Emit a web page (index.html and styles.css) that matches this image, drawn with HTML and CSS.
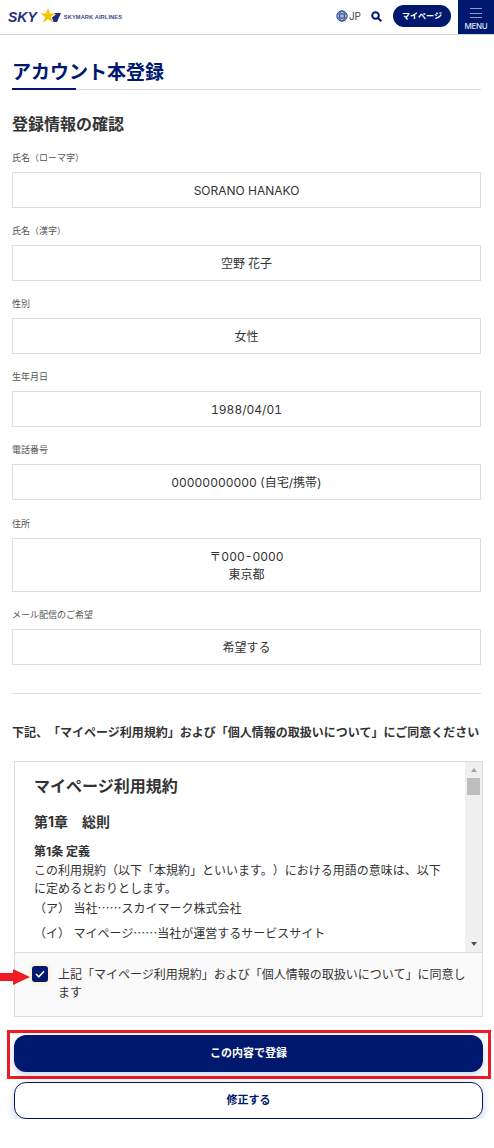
FILE: index.html
```html
<!DOCTYPE html>
<html lang="ja">
<head>
    <meta charset="UTF-8">
    <meta name="viewport" content="width=device-width, initial-scale=1.0">
    <title>アカウント本登録</title>
    <link rel="stylesheet" href="styles.css">
</head>
<body>
    <header class="header">
        <div class="logo">
            <span class="logo-sky">SKY</span>
            <svg class="logo-star" width="22" height="16" viewBox="0 0 22 16">
                <polygon fill="#f5c400" points="8,0 10,5.500 15.500,5.500 11,8.800 13,14.500 8,11 3,14.500 5,8.800 0.500,5.500 6,5.500"/>
                <polygon fill="#1f2f7e" points="14,5 21,5 17,14 13.500,14 12,9.500 15.800,6.500"/>
            </svg>
            <span class="logo-name">SKYMARK AIRLINES</span>
        </div>
        <div class="header-right">
            <div class="lang">
                <svg width="12" height="12" viewBox="0 0 12 12" fill="none" stroke="#3c4f92" stroke-width="1">
                    <circle cx="6" cy="6" r="5.200" fill="#a9b4d4"/>
                    <ellipse cx="6" cy="6" rx="2.400" ry="5.200"/>
                    <path d="M1 4h10M1 8h10"/>
                </svg>
                <span>JP</span>
            </div>
            <svg class="search" width="11" height="11" viewBox="0 0 11 11" fill="none" stroke="#00186e" stroke-width="2">
                <circle cx="4.500" cy="4.500" r="3.300"/>
                <path d="M7 7l3.300 3.300"/>
            </svg>
            <a class="mypage">マイページ</a>
            <div class="menu">
                <div class="menu-lines"><i></i><i></i><i></i></div>
                <span>MENU</span>
            </div>
        </div>
    </header>

    <main class="main">
        <h1 class="title">アカウント本登録</h1>
        <h2 class="subtitle">登録情報の確認</h2>

        <div class="field field-first">
            <div class="label">氏名（ローマ字）</div>
            <div class="value">SORANO HANAKO</div>
        </div>
        <div class="field">
            <div class="label">氏名（漢字）</div>
            <div class="value">空野 花子</div>
        </div>
        <div class="field">
            <div class="label">性別</div>
            <div class="value">女性</div>
        </div>
        <div class="field">
            <div class="label">生年月日</div>
            <div class="value">1988/04/01</div>
        </div>
        <div class="field">
            <div class="label">電話番号</div>
            <div class="value">00000000000 (自宅/携帯)</div>
        </div>
        <div class="field field-address">
            <div class="label">住所</div>
            <div class="value value-tall">〒000-0000<br>東京都</div>
        </div>
        <div class="field">
            <div class="label">メール配信のご希望</div>
            <div class="value">希望する</div>
        </div>

        <hr class="divider">

        <p class="agree-lead">下記、「マイページ利用規約」および「個人情報の取扱いについて」にご同意ください</p>

        <div class="terms">
            <div class="terms-box">
                <div class="terms-text">
                    <h3>マイページ利用規約</h3>
                    <h4>第1章　総則</h4>
                    <h5>第1条 定義</h5>
                    <p class="lead">この利用規約（以下「本規約」といいます。）における用語の意味は、以下に定めるとおりとします。</p>
                    <p class="item item-first">（ア） 当社<span class="jp">……</span>スカイマーク株式会社</p>
                    <p class="item">（イ） マイページ<span class="jp">……</span>当社が運営するサービスサイト</p>
                    <p class="item">（ウ） 登録ユーザー<span class="jp">……</span>本規約に同意のうえ当社が提供する</p>
                </div>
                <div class="scrollbar">
                    <span class="arrow-up"></span>
                    <span class="thumb"></span>
                    <span class="arrow-down"></span>
                </div>
            </div>
            <div class="consent">
                <span class="marker">
                    <svg width="31" height="16" viewBox="0 0 31 16"><polygon fill="#ee1c25" points="0,4 13,4 13,0 30,8 13,16 13,12 0,12"/></svg>
                </span>
                <span class="checkbox">
                    <svg width="10" height="8" viewBox="0 0 10 8" fill="none" stroke="#fff" stroke-width="1.500"><path d="M1 4l2.800 2.800L9 1.200"/></svg>
                </span>
                <span class="consent-text">上記「マイページ利用規約」および「個人情報の取扱いについて」に同意します</span>
            </div>
        </div>

        <div class="actions">
            <div class="highlight">
                <a class="btn btn-primary">この内容で登録</a>
            </div>
            <a class="btn btn-secondary">修正する</a>
        </div>
    </main>
</body>
</html>
```

FILE: styles.css
```css
* {
    box-sizing: border-box;
}
body {
    margin: 0;
    font-family: Inter, "Noto Sans CJK JP", sans-serif;
    text-spacing-trim: space-all;
    color: #333;
    background: #fff;
}
.jp {
    font-family: "Noto Sans CJK JP", sans-serif;
}
.header {
    display: flex;
    justify-content: space-between;
    height: 35px;
    border-bottom: 1px solid #d2d2d2;
}
.logo {
    display: flex;
    align-items: center;
    padding-left: 8px;
}
.logo-sky {
    font-family: "Liberation Sans", sans-serif;
    font-weight: 700;
    font-style: italic;
    font-size: 14px;
    letter-spacing: 0;
    color: #1f2f7e;
}
.logo-star {
    margin-left: 3px;
    margin-top: -3px;
}
.logo-name {
    margin-left: 2px;
    font-family: "Liberation Sans", sans-serif;
    font-weight: 700;
    font-size: 5.700px;
    letter-spacing: 0.1px;
    color: #3c4a8c;
}
.header-right {
    display: flex;
    align-items: flex-start;
}
.lang {
    display: flex;
    align-items: center;
    gap: 1px;
    margin-top: 10px;
    font-size: 10px;
    line-height: 12px;
    color: #445;
}
.search {
    margin: 11px 0 0 10px;
}
.mypage {
    width: 58px;
    height: 22px;
    margin: 5px 7px 0 11px;
    border-radius: 11px;
    background: #00186e;
    color: #fff;
    font-size: 8px;
    font-weight: 700;
    line-height: 22px;
    text-align: center;
}
.menu {
    width: 36px;
    height: 34px;
    background: #00186e;
    color: #fff;
    text-align: center;
}
.menu-lines {
    display: flex;
    flex-direction: column;
    gap: 3.500px;
    width: 12px;
    margin: 8px auto 0;
}
.menu-lines i {
    display: block;
    height: 1px;
    background: #8f98bd;
}
.menu span {
    display: block;
    margin-top: 3px;
    font-size: 8px;
    font-weight: 500;
    line-height: 10px;
    letter-spacing: -0.3px;
    color: #dfe4f2;
}
.main {
    padding: 0 13px 0 12px;
}
.title {
    margin: 24px 0 0;
    padding-bottom: 3px;
    font-size: 19px;
    font-weight: 700;
    line-height: 27px;
    color: #00186e;
    border-bottom: 1px solid #ddd;
    position: relative;
}
.title::after {
    content: "";
    position: absolute;
    left: 0;
    bottom: -1px;
    width: 64px;
    height: 2px;
    background: #00186e;
}
.subtitle {
    margin: 22px 0 0;
    font-size: 16px;
    font-weight: 700;
    line-height: 24px;
}
.field {
    margin-top: 15px;
}
.field-first {
    margin-top: 14px;
}
.field-address {
    margin-top: 16px;
}
.label {
    font-size: 9px;
    line-height: 15px;
    color: #555;
    margin-bottom: 7px;
}
.value {
    display: flex;
    align-items: center;
    justify-content: center;
    height: 36px;
    padding-top: 2px;
    border: 1px solid #ddd;
    font-size: 12px;
    font-variant-numeric: tabular-nums;
    line-height: 18px;
    text-align: center;
}
.value-tall {
    height: 54px;
}
.divider {
    margin: 28px 0 0;
    border: 0;
    border-top: 1px solid #ddd;
}
.agree-lead {
    margin: 29px 0 0;
    font-size: 12px;
    font-weight: 700;
    line-height: 20px;
    white-space: nowrap;
}
.terms {
    margin: 18px -2px 0 2px;
    border: 1px solid #ddd;
}
.terms-box {
    display: flex;
    height: 190px;
    overflow: hidden;
}
.terms-text {
    flex: 1;
    padding: 12px 22px 0 19px;
    font-size: 12px;
    line-height: 18px;
}
.terms-text h3 {
    margin: 0;
    font-size: 16px;
    font-weight: 700;
    line-height: 24px;
}
.terms-text h4 {
    margin: 14px 0 0;
    font-size: 14px;
    font-weight: 700;
    line-height: 20px;
}
.terms-text h5 {
    margin: 11px 0 0;
    font-size: 12px;
    font-weight: 700;
    line-height: 18px;
}
.terms-text p {
    margin: 0;
}
.terms-text .lead {
    margin-top: 1px;
}
.terms-text .item {
    margin-top: 6px;
}
.terms-text .item-first {
    margin-top: 1px;
}
.scrollbar {
    display: flex;
    flex-direction: column;
    align-items: center;
    width: 17px;
    background: #f0f0f0;
}
.arrow-up {
    margin-top: 6px;
    border: 3.500px solid transparent;
    border-top: 0;
    border-bottom: 4px solid #a3a3a3;
}
.thumb {
    width: 13px;
    height: 17px;
    margin-top: 6px;
    background: #bdbdbd;
}
.arrow-down {
    margin-top: auto;
    margin-bottom: 6px;
    border: 3.500px solid transparent;
    border-bottom: 0;
    border-top: 4px solid #505050;
}
.consent {
    position: relative;
    display: flex;
    gap: 10px;
    height: 64px;
    padding: 13px 15px 0 17px;
    background: #fafafa;
    border-top: 1px solid #ddd;
}
.marker {
    position: absolute;
    left: -15px;
    top: 16px;
    line-height: 0;
}
.checkbox {
    flex: none;
    display: flex;
    align-items: center;
    justify-content: center;
    width: 16px;
    height: 16px;
    border-radius: 3px;
    background: #00186e;
    box-shadow: 0 0 4px 1px #f8e8bd;
}
.consent-text {
    font-size: 12px;
    line-height: 18px;
}
.actions {
    display: flex;
    flex-direction: column;
    gap: 3px;
    margin: 13px -2px 0 2px;
}
.highlight {
    margin: 0 -8px 0 -7px;
    padding: 2px 5px 4px 4px;
    border: 3px solid #ee1c25;
}
.btn {
    display: block;
    height: 37px;
    border-radius: 12px;
    font-size: 11px;
    font-weight: 700;
    line-height: 37px;
    text-align: center;
    box-shadow: 0 3px 8px rgba(0, 24, 110, 0.2);
}
.btn-primary {
    background: #00186e;
    color: #fff;
}
.btn-secondary {
    background: #fff;
    border: 1px solid #00186e;
    line-height: 35px;
    color: #00186e;
}
```
